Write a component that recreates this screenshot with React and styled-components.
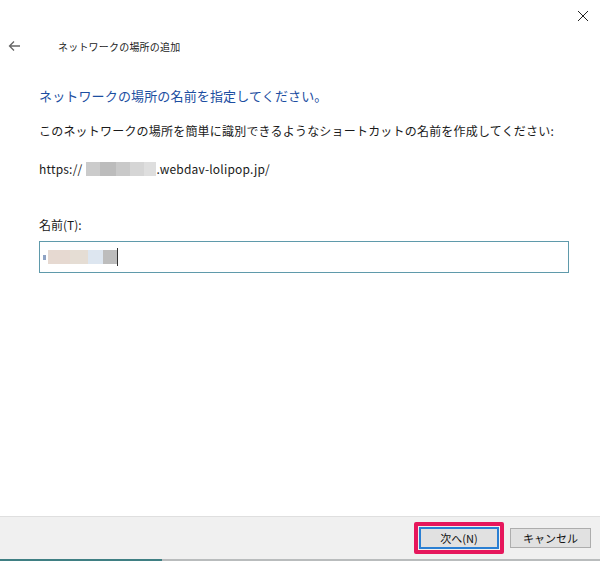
import styled, { createGlobalStyle } from "styled-components";

const GlobalStyle = createGlobalStyle`
  html, body {
    margin: 0;
    padding: 0;
    background: #ffffff;
  }
  body {
    font-family: "Noto Sans CJK JP", "Noto Sans", sans-serif;
    color: #1a1a1a;
  }
`;

const Window = styled.div`
  width: 600px;
  height: 561px;
  display: flex;
  flex-direction: column;
  background: #ffffff;
  overflow: hidden;
`;

const TitleBar = styled.div`
  height: 30px;
  display: flex;
  justify-content: flex-end;
  align-items: center;
  padding-right: 9px;
`;

const CloseButton = styled.button`
  width: 16px;
  height: 16px;
  padding: 0;
  border: none;
  background: none;
  display: flex;
  align-items: center;
  justify-content: center;
  margin-top: 1px;
`;

const NavRow = styled.div`
  height: 32px;
  display: flex;
  align-items: center;
  padding-left: 8px;
`;

const BackButton = styled.button`
  width: 14px;
  height: 14px;
  padding: 0;
  border: none;
  background: none;
  display: flex;
  align-items: center;
  margin-right: 36px;
`;

const WizardTitle = styled.span`
  font-size: 10px;
  color: #222;
  letter-spacing: 0.2px;
`;

const Content = styled.div`
  flex: 1;
  display: flex;
  flex-direction: column;
  padding: 0 32px 0 39px;
`;

const Heading = styled.h1`
  margin: 25px 0 0 0;
  font-size: 13px;
  font-weight: 400;
  color: #1c4ea1;
  line-height: 18px;
  letter-spacing: 0.15px;
`;

const Text = styled.p`
  margin: ${(p) => p.$top}px 0 0 0;
  font-size: 12px;
  line-height: 16px;
  color: #1a1a1a;
  display: flex;
  align-items: center;
  letter-spacing: 0.2px;
`;

const Blur = styled.span`
  display: inline-flex;
  height: 14px;
`;

const Pixel = styled.span`
  display: inline-block;
  height: 100%;
  width: ${(p) => p.$w}px;
  background: ${(p) => p.$c};
`;

const Label = styled.label`
  margin-top: 40px;
  font-size: 12px;
  line-height: 16px;
  color: #1a1a1a;
`;

const Input = styled.div`
  margin-top: 8px;
  width: 530px;
  height: 32px;
  box-sizing: border-box;
  border: 1px solid #5f9aab;
  display: flex;
  align-items: center;
  padding-left: 3px;
`;

const Caret = styled.span`
  width: 1px;
  height: 18px;
  background: #333;
`;

const Footer = styled.div`
  height: 42px;
  background: #f0f0f0;
  border-top: 1px solid #dfdfdf;
  display: flex;
  justify-content: flex-end;
  align-items: center;
  padding-right: 9px;
  gap: 6px;
`;

const Highlight = styled.div`
  border: 4px solid #e6175c;
  border-radius: 2px;
  padding: 1px;
  display: flex;
`;

const Button = styled.button`
  width: ${(p) => (p.$primary ? 80 : 81)}px;
  height: ${(p) => (p.$primary ? 22 : 20)}px;
  box-sizing: border-box;
  border: ${(p) => (p.$primary ? "2px solid #2a7fd3" : "1px solid #adadad")};
  background: #e1e1e1;
  font-family: "Noto Sans CJK JP", "Noto Sans", sans-serif;
  font-size: 11px;
  color: #111;
  padding: 0;
  display: flex;
  align-items: center;
  justify-content: center;
`;

const TaskStrip = styled.div`
  height: 2px;
  display: flex;
`;

const StripPart = styled.div`
  width: ${(p) => p.$w};
  flex: ${(p) => (p.$grow ? 1 : "none")};
  background: ${(p) => p.$c};
`;

const urlBlur = [
  ["#cbcbcb", 14],
  ["#bcbcbc", 16],
  ["#c9c9c9", 14],
  ["#d5d5d5", 14],
  ["#dedede", 12],
];

const nameBlur = [
  ["#e6d9d1", 22],
  ["#e5ddd4", 18],
  ["#dde6f0", 15],
  ["#bdbdbd", 14],
];

export default function App() {
  return (
    <Window>
      <GlobalStyle />
      <TitleBar>
        <CloseButton aria-label="閉じる">
          <svg width="12" height="12" viewBox="0 0 12 12">
            <path d="M1 1 L11 11 M11 1 L1 11" stroke="#222" strokeWidth="1" />
          </svg>
        </CloseButton>
      </TitleBar>
      <NavRow>
        <BackButton aria-label="戻る">
          <svg width="13" height="12" viewBox="0 0 13 12">
            <path
              d="M12 6 H1.5 M6 1.5 L1.5 6 L6 10.5"
              stroke="#666"
              strokeWidth="1.3"
              fill="none"
            />
          </svg>
        </BackButton>
        <WizardTitle>ネットワークの場所の追加</WizardTitle>
      </NavRow>
      <Content>
        <Heading>ネットワークの場所の名前を指定してください。</Heading>
        <Text $top={18}>
          このネットワークの場所を簡単に識別できるようなショートカットの名前を作成してください:
        </Text>
        <Text $top={22}>
          https://
          <Blur style={{ marginLeft: 4 }}>
            {urlBlur.map(([c, w], i) => (
              <Pixel key={i} $c={c} $w={w} />
            ))}
          </Blur>
          .webdav-lolipop.jp/
        </Text>
        <Label>名前(T):</Label>
        <Input>
          <Blur style={{ height: 5, alignSelf: "center", marginRight: 2 }}>
            <Pixel $c="#8fa3c4" $w={3} />
          </Blur>
          <Blur>
            {nameBlur.map(([c, w], i) => (
              <Pixel key={i} $c={c} $w={w} />
            ))}
          </Blur>
          <Caret />
        </Input>
      </Content>
      <Footer>
        <Highlight>
          <Button $primary>次へ(N)</Button>
        </Highlight>
        <Button>キャンセル</Button>
      </Footer>
      <TaskStrip>
        <StripPart $w="162px" $c="#3f7f83" />
        <StripPart $grow $c="#b9bcbd" />
      </TaskStrip>
    </Window>
  );
}
